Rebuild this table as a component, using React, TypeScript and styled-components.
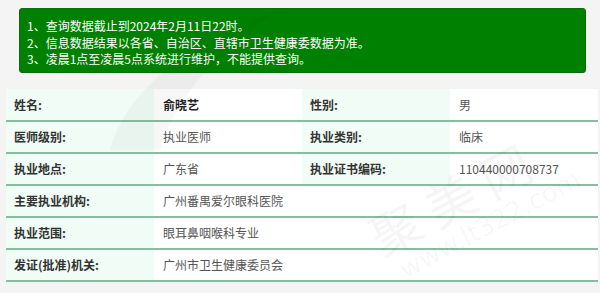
import React from "react";
import styled, { createGlobalStyle } from "styled-components";

const Global = createGlobalStyle`
  html, body { margin: 0; padding: 0; background: #f4f4f4; }
  body { font-family: "Noto Sans CJK SC", "Noto Sans", sans-serif; overflow: hidden; }
`;

const Page = styled.div`
  position: relative;
  padding: 8px 2px 0 6px;
  height: 293px;
  box-sizing: border-box;
  overflow: hidden;
`;

const Notice = styled.div`
  margin: 0 12px 0 13px;
  background: #008000;
  border: 1px solid #0a6e0a;
  border-radius: 3px;
  padding: 9px 8px 4px 7px;
  color: #ffffff;
  font-size: 12px;
  line-height: 16.5px;
`;

const Table = styled.table`
  margin-top: 16px;
  width: 592px;
  border-collapse: collapse;
  table-layout: fixed;
  background: #ffffff;
  font-size: 12px;
`;

const Row = styled.tr`
  border-bottom: 2px solid #86bfa0;
`;

const Label = styled.td`
  width: 148px;
  height: 32px;
  padding: 0 0 0 8px;
  background: #f1fcf6;
  color: #333333;
  font-weight: bold;
  box-sizing: border-box;
`;

const Value = styled.td<{ $strong?: boolean }>`
  height: 32px;
  padding: 0 0 0 9px;
  color: ${(p) => (p.$strong ? "#222222" : "#555555")};
  font-weight: ${(p) => (p.$strong ? "bold" : "normal")};
  box-sizing: border-box;
`;

const Watermark = styled.div<{ $x: number; $y: number }>`
  position: absolute;
  left: ${(p) => p.$x}px;
  top: ${(p) => p.$y}px;
  transform: rotate(-28deg);
  transform-origin: left top;
  color: rgba(0, 0, 0, 0.04);
  pointer-events: none;
  display: flex;
  flex-direction: column;
  align-items: flex-start;
`;

const WmBig = styled.span`
  font-size: 50px;
  letter-spacing: 12px;
  line-height: 54px;
`;

const WmSmall = styled.span`
  font-family: "DejaVu Sans", sans-serif;
  font-size: 26px;
  line-height: 30px;
  margin-left: 10px;
`;

const Swoosh = styled.svg`
  position: absolute;
  left: 90px;
  top: 0;
  pointer-events: none;
`;

export default function App() {
  return (
    <>
      <Global />
      <Page>
        <Notice>
          <div>1、查询数据截止到2024年2月11日22时。</div>
          <div>2、信息数据结果以各省、自治区、直辖市卫生健康委数据为准。</div>
          <div>3、凌晨1点至凌晨5点系统进行维护，不能提供查询。</div>
        </Notice>
        <Table>
          <tbody>
            <Row>
              <Label>姓名:</Label>
              <Value $strong>俞晓艺</Value>
              <Label>性别:</Label>
              <Value>男</Value>
            </Row>
            <Row>
              <Label>医师级别:</Label>
              <Value>执业医师</Value>
              <Label>执业类别:</Label>
              <Value>临床</Value>
            </Row>
            <Row>
              <Label>执业地点:</Label>
              <Value>广东省</Value>
              <Label>执业证书编码:</Label>
              <Value>110440000708737</Value>
            </Row>
            <Row>
              <Label>主要执业机构:</Label>
              <Value colSpan={3}>广州番禺爱尔眼科医院</Value>
            </Row>
            <Row>
              <Label>执业范围:</Label>
              <Value colSpan={3}>眼耳鼻咽喉科专业</Value>
            </Row>
            <Row>
              <Label>发证(批准)机关:</Label>
              <Value colSpan={3}>广州市卫生健康委员会</Value>
            </Row>
          </tbody>
        </Table>
        <Swoosh width="200" height="160" viewBox="0 0 200 160">
          <path d="M20 150 C40 80 110 40 190 10 C130 50 90 90 70 150 Z" fill="rgba(0,0,0,0.03)" />
        </Swoosh>
        <Watermark $x={360} $y={215}>
          <WmBig>聚美网</WmBig>
          <WmSmall>www.lt322.com</WmSmall>
        </Watermark>
      </Page>
    </>
  );
}
